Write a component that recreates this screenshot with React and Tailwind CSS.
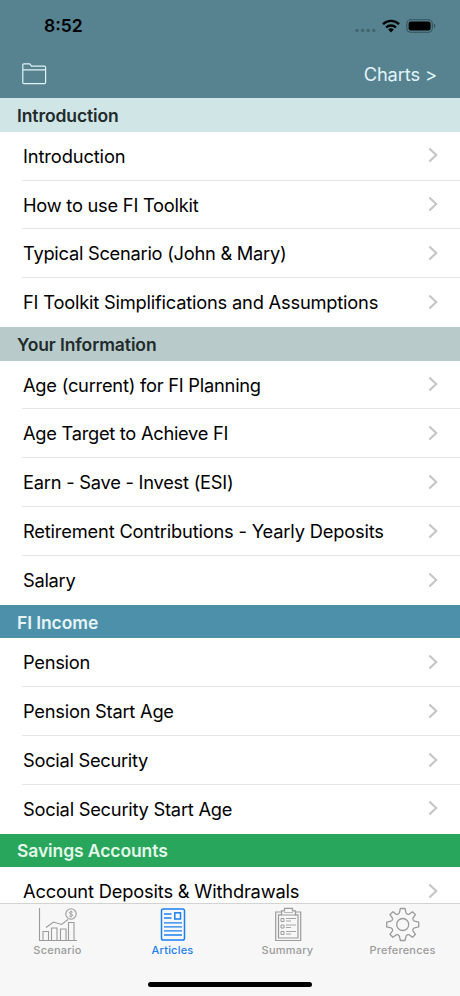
const SECTIONS = [
  {
    title: "Introduction",
    bar: "bg-[#cfe5e6] text-[#222b2b]",
    rows: [
      { text: "Introduction", tracking: "tracking-[-0.12px]" },
      { text: "How to use FI Toolkit", tracking: "tracking-[-0.24px]" },
      { text: "Typical Scenario (John & Mary)", tracking: "tracking-[-0.26px]" },
      { text: "FI Toolkit Simplifications and Assumptions", tracking: "tracking-[-0.2px]" },
    ],
  },
  {
    title: "Your Information",
    bar: "bg-[#b8cbca] text-[#222b2b]",
    rows: [
      { text: "Age (current) for FI Planning", tracking: "tracking-[-0.24px]" },
      { text: "Age Target to Achieve FI", tracking: "tracking-[-0.28px]" },
      { text: "Earn - Save - Invest (ESI)", tracking: "tracking-[-0.24px]" },
      { text: "Retirement Contributions - Yearly Deposits", tracking: "tracking-[-0.18px]" },
      { text: "Salary", tracking: "tracking-[-0.28px]" },
    ],
  },
  {
    title: "FI Income",
    bar: "bg-[#4c91a9] text-[#e6f4f8]",
    rows: [
      { text: "Pension", tracking: "tracking-[-0.28px]" },
      { text: "Pension Start Age", tracking: "tracking-[-0.24px]" },
      { text: "Social Security", tracking: "tracking-[-0.28px]" },
      { text: "Social Security Start Age", tracking: "tracking-[-0.24px]" },
    ],
  },
  {
    title: "Savings Accounts",
    bar: "bg-[#28a65b] text-[#e4f7ea]",
    rows: [{ text: "Account Deposits & Withdrawals", tracking: "tracking-[-0.18px]" }],
  },
];

function Chevron() {
  return (
    <svg className="mr-[22px] mb-[2px] shrink-0" width="10" height="16" viewBox="0 0 10 16" fill="none" stroke="#c4c4c6" strokeWidth="2">
      <path d="M1.3 1.5 8.3 8l-7 6.5" />
    </svg>
  );
}

function Section({ title, bar, rows }) {
  return (
    <section className="shrink-0">
      <h2 className={`flex h-[33.6px] items-center pl-[17px] pt-[2.5px] text-[17.5px] font-semibold tracking-[-0.1px] ${bar}`}>
        {title}
      </h2>
      <ul>
        {rows.map(({ text, tracking }, i) => (
          <li
            key={text}
            className={`ml-[22px] flex h-[48.82px] items-center justify-between border-b pt-[1.5px] pl-px text-[18.3px] text-black ${
              i === rows.length - 1 ? "border-transparent" : "border-[#e6e6e7]"
            }`}
          >
            <span className={`whitespace-nowrap ${tracking}`}>{text}</span>
            <Chevron />
          </li>
        ))}
      </ul>
    </section>
  );
}

function ScenarioIcon() {
  return (
    <svg width="40" height="36" viewBox="0 0 40 36" fill="none" stroke="currentColor" strokeWidth="1.1">
      <path d="M1.5 1v32.5H39" />
      <path d="M5 33.5v-9h5.5v9M13.5 33.5V21H19v12.5M22.5 33.5V22H28v11.5M30.5 33.5V15.5H36v18" />
      <path d="m8 20.5 7.500-5.500 8 2.500 6.500-5" />
      <circle cx="33" cy="7" r="5.2" />
      <path d="M34.7 5.200c-.5-.7-3.300-.8-3.300.6 0 1.500 3.400.8 3.400 2.500 0 1.500-3 1.400-3.600.4M33 3.500v7" strokeWidth=".9" />
    </svg>
  );
}

function ArticlesIcon() {
  return (
    <svg width="40" height="36" viewBox="0 0 40 36" fill="none" stroke="currentColor" strokeWidth="1.5">
      <rect x="8.5" y="2" width="23" height="31" rx="1.8" />
      <rect x="21.8" y="5.8" width="5.7" height="6.2" />
      <path d="M11 7h7.500M11 11h7.500M11 15.800h18M11 19.800h18M11 23.800h18M11 28h18" strokeWidth="1.3" />
    </svg>
  );
}

function SummaryIcon() {
  return (
    <svg width="40" height="36" viewBox="0 0 40 36" fill="none" stroke="currentColor" strokeWidth="1.2">
      <path d="M13 5H7.700v28.500h25V5H27.500" />
      <path d="M13.500 7.800H10.500V31H30V7.800H27" />
      <path d="M13.500 3.800h3V1.300h8v2.500h3V8h-14z" />
      <path d="M16 5.500h9" strokeWidth=".7" />
      <path d="M13 11.500h3v3h-3zM13 18h3v3h-3zM13 24.500h3v3h-3z" strokeWidth="1" />
      <path d="M18 11.500h10M18 14h5M18 18h10M18 20.500h5M18 24.500h10M18 27h5" strokeWidth=".9" />
    </svg>
  );
}

function PreferencesIcon() {
  return (
    <svg width="40" height="36" viewBox="0 0 40 36" fill="none" stroke="currentColor" strokeWidth="1.3" strokeLinejoin="round">
      <g transform="translate(19.7 17.5)">
        <path d="M-2.300-16H2.300L3.300-11.800Q3.500-11 4.300-10.600L5.200-10.200Q6-9.900 6.700-10.400L9.800-12.800 12.800-9.800 10.400-6.700Q9.900-6 10.200-5.200L10.600-4.300Q11-3.500 11.800-3.300L16-2.300V2.300L11.800 3.300Q11 3.500 10.600 4.300L10.200 5.200Q9.900 6 10.400 6.700L12.800 9.800 9.800 12.800 6.700 10.400Q6 9.900 5.200 10.200L4.300 10.600Q3.500 11 3.300 11.800L2.300 16H-2.300L-3.300 11.800Q-3.500 11-4.300 10.600L-5.200 10.200Q-6 9.900-6.700 10.400L-9.800 12.800-12.800 9.800-10.400 6.700Q-9.900 6-10.200 5.200L-10.600 4.300Q-11 3.500-11.800 3.300L-16 2.300V-2.300L-11.800-3.300Q-11-3.500-10.600-4.300L-10.200-5.200Q-9.900-6-10.400-6.700L-12.800-9.800-9.800-12.800-6.700-10.400Q-6-9.900-5.200-10.200L-4.300-10.600Q-3.500-11-3.300-11.800Z" />
        <circle r="6" />
      </g>
    </svg>
  );
}

const TABS = [
  { label: "Scenario", Icon: ScenarioIcon },
  { label: "Articles", Icon: ArticlesIcon, active: true },
  { label: "Summary", Icon: SummaryIcon },
  { label: "Preferences", Icon: PreferencesIcon },
];

function StatusBar() {
  return (
    <div className="flex h-[50px] items-center justify-between pl-[44px] pr-[24px] pt-px text-black">
      <span className="pt-px text-[17.5px] font-semibold">8:52</span>
      <div className="flex items-center">
        <svg width="21" height="5" viewBox="0 0 21 5" fill="#416672" className="mt-[9px]">
          <circle cx="2" cy="2.5" r="1.8" />
          <circle cx="7.6" cy="2.5" r="1.8" />
          <circle cx="13.2" cy="2.5" r="1.8" />
          <circle cx="18.8" cy="2.5" r="1.8" />
        </svg>
        <svg width="18" height="14" viewBox="0 0 18 14" fill="none" stroke="black" strokeWidth="2.3" className="ml-[6px]">
          <path d="M1 5.200a11.500 11.500 0 0 1 16 0M4 8.500a7.200 7.200 0 0 1 10 0" />
          <path d="M6.200 10.600a4 4 0 0 1 5.600 0L9 13.500z" fill="black" stroke="none" />
        </svg>
        <svg width="30" height="14" viewBox="0 0 30 14" className="ml-[6px]">
          <rect x=".8" y=".8" width="25.5" height="12.4" rx="4" fill="none" stroke="#34525c" strokeWidth="1.1" />
          <rect x="2.6" y="2.5" width="22" height="9" rx="2.2" fill="black" />
          <path d="M27.800 4.800c2 .6 2 3.800 0 4.400z" fill="#34525c" />
        </svg>
      </div>
    </div>
  );
}

export default function App() {
  return (
    <div className="flex h-[996px] w-[460px] flex-col overflow-hidden bg-white font-[Inter,'Liberation_Sans',sans-serif]">
      <header className="h-[98.2px] shrink-0 bg-[#56838f]">
        <StatusBar />
        <div className="flex h-[48px] items-center justify-between pl-[22px] pr-[23px] text-[#e3f3fa]">
          <svg width="25" height="22" viewBox="0 0 25 22" fill="none" stroke="currentColor" strokeWidth="1.2" strokeLinejoin="round">
            <path d="M.8 19.500V2Q.8.900 2 .9h5.800l1.700 2.300h12.800q1.300 0 1.300 1.300v15q0 1.200-1.200 1.200H2Q.8 20.700.8 19.500zM.8 6.900h22.800" />
          </svg>
          <span className="pt-px text-[18.3px] tracking-[-0.12px]">Charts &gt;</span>
        </div>
      </header>
      <main className="flex min-h-0 flex-1 flex-col overflow-hidden">
        {SECTIONS.map((s) => (
          <Section key={s.title} {...s} />
        ))}
      </main>
      <footer className="flex h-[93px] shrink-0 flex-col items-center justify-between border-t border-[#d3d3d4] bg-[#f7f7f7] pb-[9px]">
        <nav className="grid w-full grid-cols-4 pt-[3px]">
          {TABS.map(({ label, Icon, active }) => (
            <div key={label} className={`flex flex-col items-center ${active ? "text-[#1a80f0]" : "text-[#9b9b9c]"}`}>
              <Icon />
              <span className="text-[11px] leading-[15px] font-medium tracking-[0.22px]">{label}</span>
            </div>
          ))}
        </nav>
        <div className="h-[5.5px] w-[164px] rounded-full bg-black" />
      </footer>
    </div>
  );
}
